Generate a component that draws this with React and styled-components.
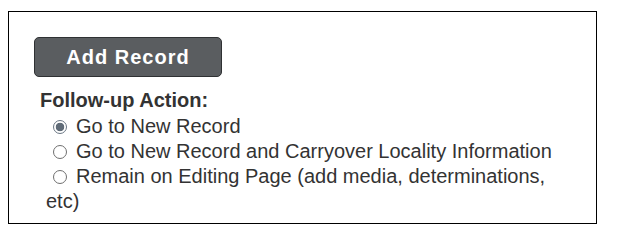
import React, { useState } from 'react';
import styled, { createGlobalStyle } from 'styled-components';

const GlobalStyle = createGlobalStyle`
	body {
		margin: 0;
		background: #fff;
		font-family: "Liberation Sans", Arial, sans-serif;
		color: #333;
	}
`;

const Panel = styled.div`
	box-sizing: border-box;
	width: 589px;
	height: 213px;
	margin: 11px 0 0 8px;
	padding: 25px 25px 0 25px;
	border: 1px solid #000;
`;

const AddButton = styled.button`
	box-sizing: border-box;
	display: block;
	width: 188px;
	height: 40px;
	margin: 0;
	padding: 0;
	border: 1px solid #2f3133;
	border-radius: 5px;
	background: #5a5d60;
	color: #fff;
	font-family: "Liberation Sans", Arial, sans-serif;
	font-size: 20px;
	font-weight: 700;
	letter-spacing: 1px;
	line-height: 38px;
	text-align: center;
	cursor: pointer;
`;

const Options = styled.div`
	margin-top: 11px;
	padding-left: 6px;
	font-size: 20px;
	line-height: 25px;
`;

const Heading = styled.div`
	font-weight: 700;
	margin-bottom: 1px;
`;

const OptionRow = styled.label`
	display: block;
	padding-left: 6px;
	cursor: pointer;
`;

const Radio = styled.input.attrs({ type: 'radio' })`
	appearance: none;
	box-sizing: border-box;
	width: 14px;
	height: 14px;
	margin: 0 9px 0 7px;
	vertical-align: -1px;
	border: 1px solid ${({ checked }) => (checked ? '#6a7683' : '#6f6f6f')};
	border-radius: 50%;
	background: ${({ checked }) =>
		checked ? 'radial-gradient(circle, #5f6b77 0 4px, #fff 4.6px)' : '#fff'};
`;

const OPTIONS = [
	{ value: 'new', label: 'Go to New Record' },
	{ value: 'carry', label: 'Go to New Record and Carryover Locality Information' },
	{ value: 'stay', label: 'Remain on Editing Page (add media, determinations, etc)' },
];

const App = () => {
	const [action, setAction] = useState('new');

	return (
		<>
			<GlobalStyle />
			<Panel>
				<AddButton type="button">Add Record</AddButton>
				<Options>
					<Heading>Follow-up Action:</Heading>
					{OPTIONS.map(({ value, label }) => (
						<OptionRow key={value}>
							<Radio
								name="followup"
								value={value}
								checked={action === value}
								onChange={() => setAction(value)}
							/>
							{label}
						</OptionRow>
					))}
				</Options>
			</Panel>
		</>
	);
};

export default App;
